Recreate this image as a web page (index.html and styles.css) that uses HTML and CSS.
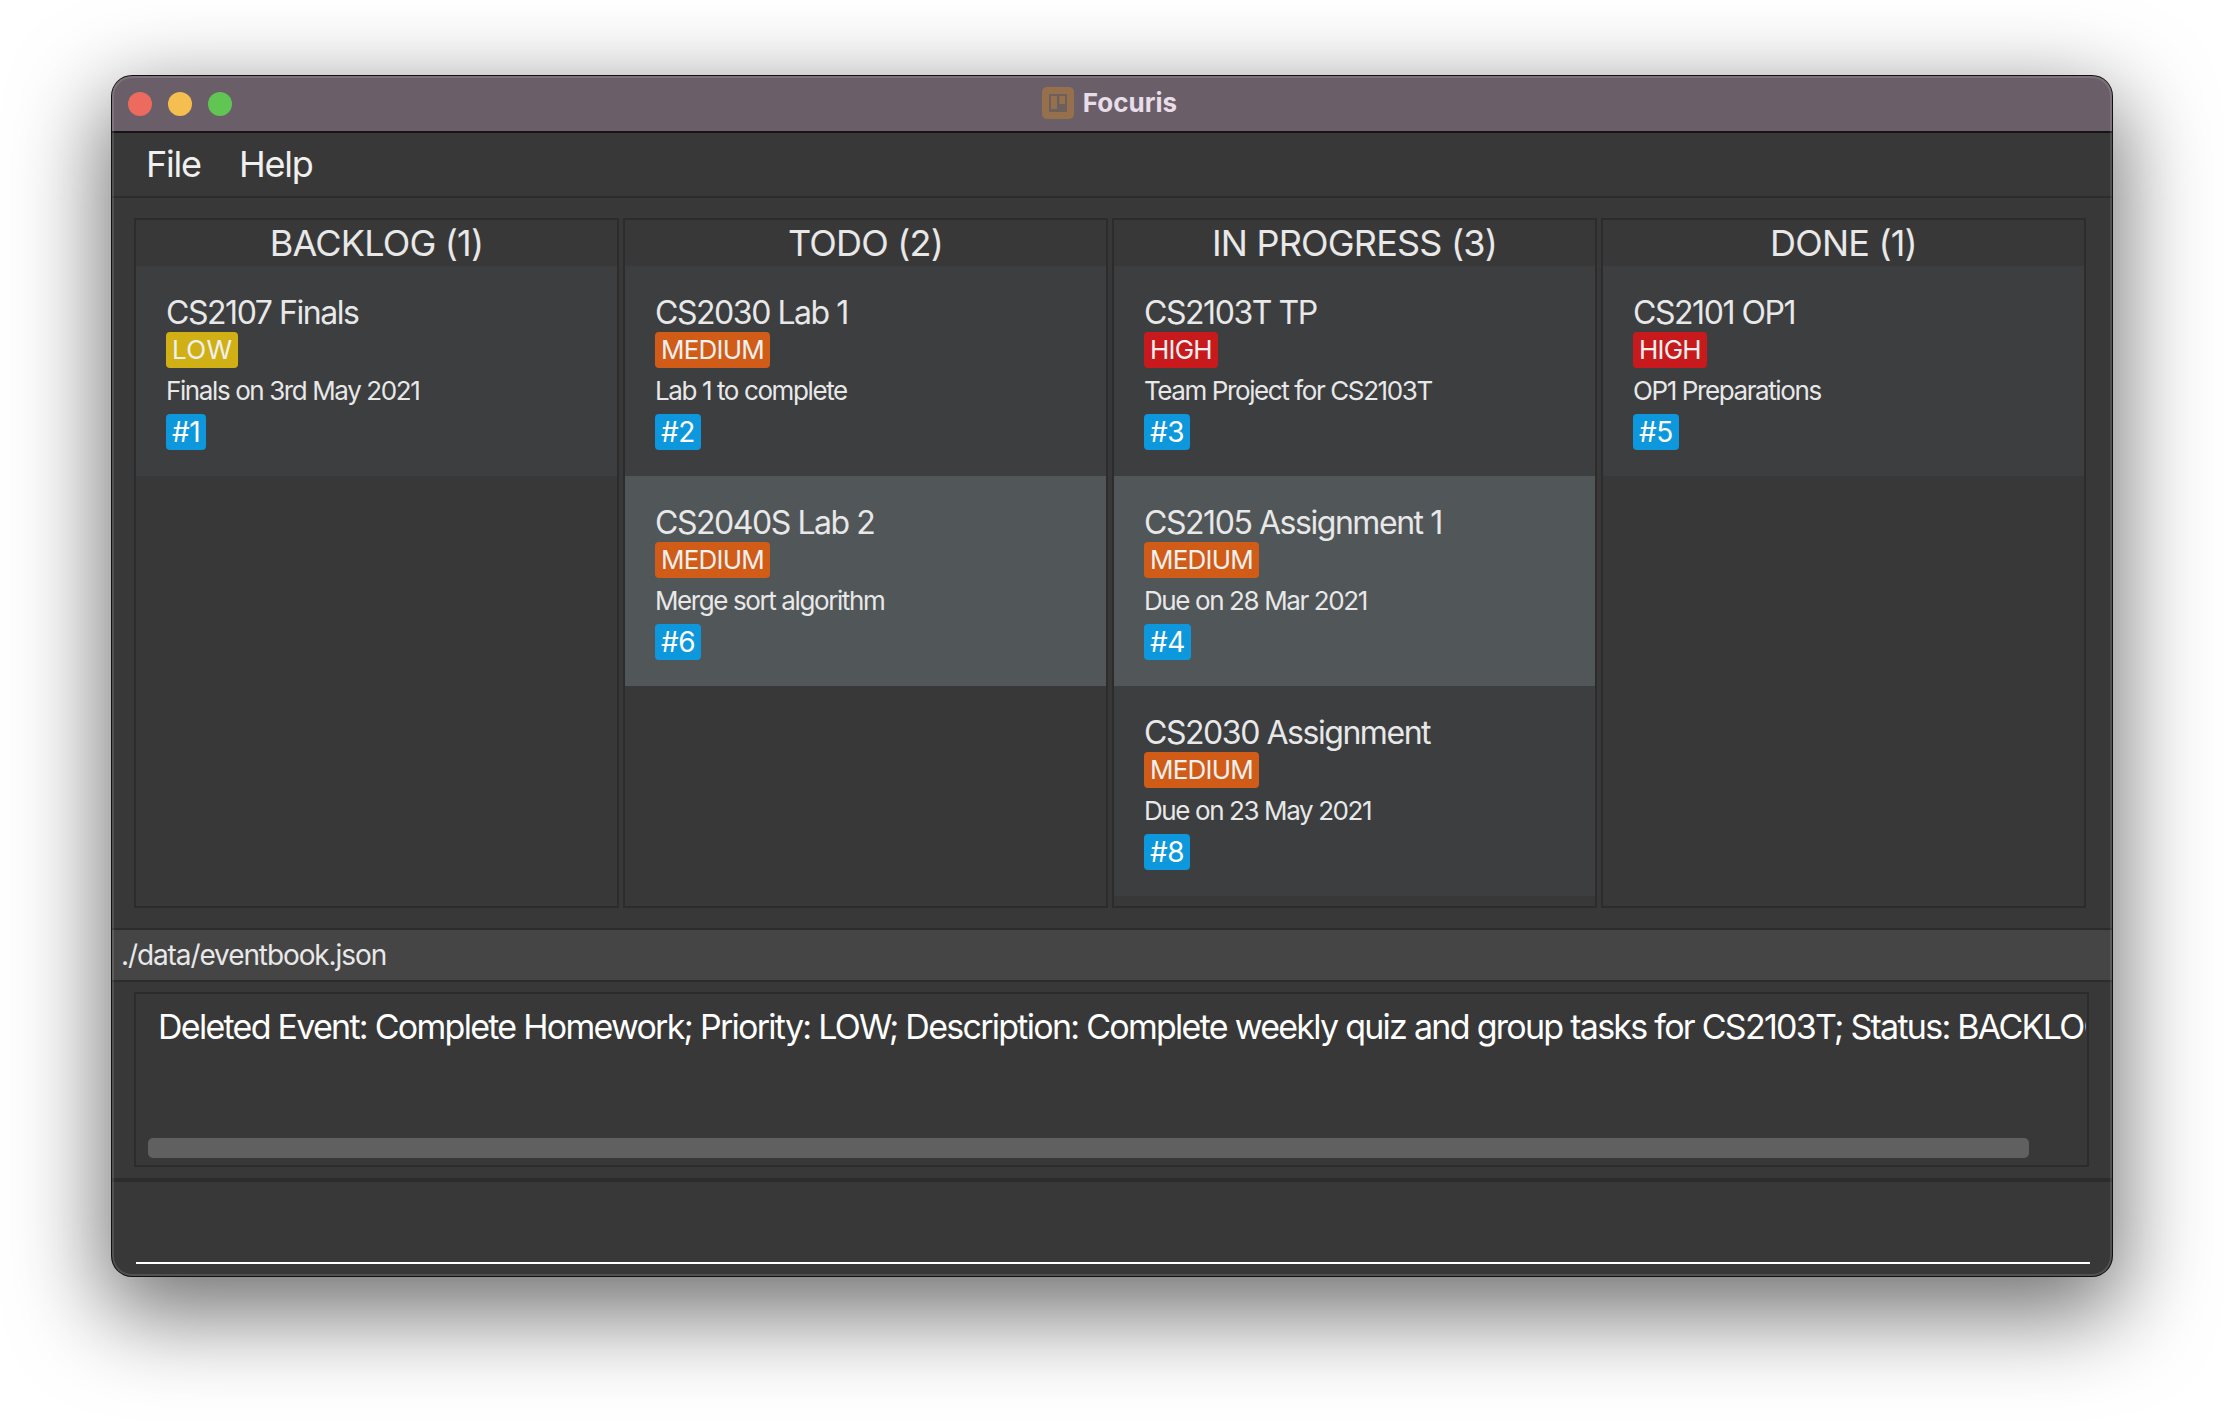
FILE: index.html
```html
<!DOCTYPE html>
<html lang="en">
<head>
    <meta charset="UTF-8">
    <title>Focuris</title>
    <link rel="stylesheet" href="styles.css">
</head>
<body>
    <div class="window">
        <div class="titlebar">
            <div class="lights">
                <span class="light red"></span>
                <span class="light yellow"></span>
                <span class="light green"></span>
            </div>
            <div class="app-title">
                <svg class="app-icon" width="32" height="32" viewBox="0 0 32 32">
                    <rect width="32" height="32" rx="5" fill="#96704c"/>
                    <rect x="7" y="7" width="18" height="18" fill="#6e5f5f"/>
                    <rect x="9" y="9" width="6" height="13" fill="#96704c"/>
                    <rect x="17.5" y="9" width="5.5" height="8" fill="#96704c"/>
                </svg>
                <span>Focuris</span>
            </div>
        </div>
        <div class="menubar">
            <span class="menu-item">File</span>
            <span class="menu-item">Help</span>
        </div>
        <div class="board">
            <div class="column">
                <div class="column-title">BACKLOG (1)</div>
                <div class="card">
                    <div class="card-title">CS2107 Finals</div>
                    <span class="tag low">LOW</span>
                    <div class="card-desc">Finals on 3rd May 2021</div>
                    <span class="tag id">#1</span>
                </div>
            </div>
            <div class="column">
                <div class="column-title">TODO (2)</div>
                <div class="card">
                    <div class="card-title">CS2030 Lab 1</div>
                    <span class="tag medium">MEDIUM</span>
                    <div class="card-desc">Lab 1 to complete</div>
                    <span class="tag id">#2</span>
                </div>
                <div class="card even">
                    <div class="card-title">CS2040S Lab 2</div>
                    <span class="tag medium">MEDIUM</span>
                    <div class="card-desc">Merge sort algorithm</div>
                    <span class="tag id">#6</span>
                </div>
            </div>
            <div class="column">
                <div class="column-title">IN PROGRESS (3)</div>
                <div class="card">
                    <div class="card-title">CS2103T TP</div>
                    <span class="tag high">HIGH</span>
                    <div class="card-desc">Team Project for CS2103T</div>
                    <span class="tag id">#3</span>
                </div>
                <div class="card even">
                    <div class="card-title">CS2105 Assignment 1</div>
                    <span class="tag medium">MEDIUM</span>
                    <div class="card-desc">Due on 28 Mar 2021</div>
                    <span class="tag id">#4</span>
                </div>
                <div class="card">
                    <div class="card-title">CS2030 Assignment</div>
                    <span class="tag medium">MEDIUM</span>
                    <div class="card-desc">Due on 23 May 2021</div>
                    <span class="tag id">#8</span>
                </div>
            </div>
            <div class="column">
                <div class="column-title">DONE (1)</div>
                <div class="card">
                    <div class="card-title">CS2101 OP1</div>
                    <span class="tag high">HIGH</span>
                    <div class="card-desc">OP1 Preparations</div>
                    <span class="tag id">#5</span>
                </div>
            </div>
        </div>
        <div class="status-path">./data/eventbook.json</div>
        <div class="result-wrap">
            <div class="result-box">
                <div class="result-text">Deleted Event: Complete Homework; Priority: LOW; Description: Complete weekly quiz and group tasks for CS2103T; Status: BACKLOG</div>
                <div class="scrollbar"></div>
            </div>
        </div>
        <div class="command">
            <div class="command-line"></div>
        </div>
    </div>
</body>
</html>
```

FILE: styles.css
```css
* {
    box-sizing: border-box;
}
body {
    margin: 0;
    padding: 76px 112px 0 112px;
    min-height: 100vh;
    background-color: #fff;
    font-family: "Inter", "Liberation Sans", sans-serif;
}
.window {
    position: relative;
    display: flex;
    flex-direction: column;
    width: 2000px;
    height: 1200px;
    overflow: hidden;
    border-radius: 20px;
    background-color: #383838;
    box-shadow: 0 0 0 1px #111, 0 30px 90px 8px rgba(0, 0, 0, 0.56);
}
.window::after {
    content: "";
    position: absolute;
    inset: 0;
    border-radius: 20px;
    box-shadow: inset 0 0 0 2px rgba(255, 255, 255, 0.13);
    pointer-events: none;
}
.titlebar {
    position: relative;
    display: flex;
    align-items: center;
    justify-content: center;
    flex: none;
    height: 57px;
    background-color: #6a5f69;
    border-bottom: 2px solid #151515;
}
.lights {
    position: absolute;
    left: 16px;
    top: 16px;
    display: flex;
    gap: 16px;
}
.light {
    width: 24px;
    height: 24px;
    border-radius: 50%;
}
.red {
    background-color: #ed6a5e;
}
.yellow {
    background-color: #f4bf4f;
}
.green {
    background-color: #61c554;
}
.app-title {
    display: flex;
    align-items: center;
    gap: 9px;
    margin: 0 5px 2px 0;
    color: #e8dde8;
    font-size: 26px;
    font-weight: 700;
}
.menubar {
    display: flex;
    flex: none;
    align-items: center;
    gap: 38px;
    height: 65px;
    padding: 0 0 2px 34px;
    border-bottom: 2px solid #2c2c2c;
}
.menu-item {
    color: #f0f0f0;
    font-size: 36px;
    letter-spacing: -1.2px;
}
.board {
    display: flex;
    flex: none;
    gap: 4px;
    height: 732px;
    padding: 20px 26px 20px 22px;
    border-bottom: 2px solid #2c2c2c;
}
.column {
    flex: 1;
    min-width: 0;
    border: 2px solid #2c2c2c;
}
.column-title {
    height: 46px;
    color: #e8e8e8;
    font-size: 36px;
    line-height: 46px;
    letter-spacing: -0.8px;
    text-align: center;
}
.card {
    display: flex;
    flex-direction: column;
    align-items: flex-start;
    height: 210px;
    padding: 28px 30px 0 30px;
    background-color: #3c3e40;
}
.even {
    background-color: #515658;
}
.card-title {
    height: 38px;
    color: #e8e8e8;
    font-size: 32px;
    line-height: 38px;
    letter-spacing: -1.45px;
}
.tag {
    height: 36px;
    padding: 0 6px;
    border-radius: 4px;
    color: #f0f0f0;
    font-size: 26px;
    line-height: 36px;
    letter-spacing: -0.8px;
}
.low {
    background-color: #d1b016;
    letter-spacing: 0.3px;
}
.medium {
    background-color: #d05c17;
}
.high {
    background-color: #c81a1c;
}
.id {
    background-color: #0d97dc;
    color: #fff;
    font-size: 28px;
    letter-spacing: -0.5px;
}
.card-desc {
    height: 46px;
    color: #e8e8e8;
    font-size: 26px;
    line-height: 46px;
    letter-spacing: -1.4px;
}
.status-path {
    flex: none;
    height: 52px;
    padding-left: 9px;
    background-color: #454545;
    border-bottom: 2px solid #2c2c2c;
    color: #e8e8e8;
    font-size: 28px;
    line-height: 50px;
    letter-spacing: -1.1px;
}
.result-wrap {
    flex: none;
    height: 200px;
    padding: 10px 23px 11px 22px;
    border-bottom: 4px solid #2c2c2c;
}
.result-box {
    display: flex;
    flex-direction: column;
    justify-content: space-between;
    height: 100%;
    padding: 0 0 7px 0;
    border: 2px solid #2c2c2c;
}
.result-text {
    overflow: hidden;
    margin: 11px 0 0 22px;
    width: 1928px;
    color: #fff;
    font-size: 34px;
    line-height: 44px;
    letter-spacing: -1.73px;
    white-space: nowrap;
}
.scrollbar {
    width: 1881px;
    height: 20px;
    margin-left: 12px;
    border-radius: 5px;
    background-color: #606060;
}
.command {
    flex: 1;
    padding: 80px 22px 0 24px;
}
.command-line {
    height: 2px;
    background-color: #fff;
}
```
